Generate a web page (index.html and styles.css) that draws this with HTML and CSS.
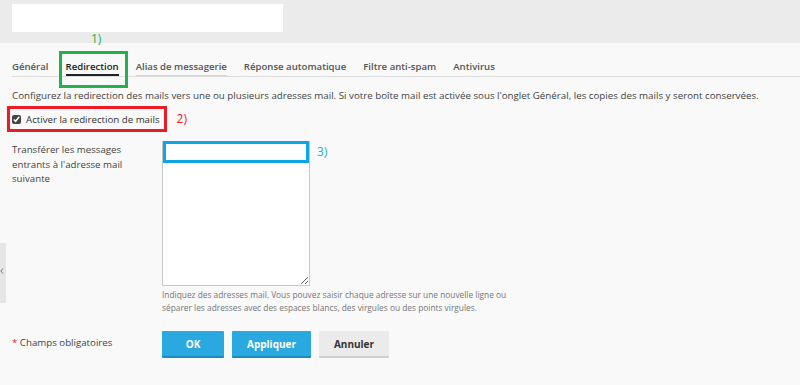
FILE: index.html
```html
<!DOCTYPE html>
<html lang="fr">
<head>
<meta charset="utf-8">
<title>Redirection</title>
<link rel="stylesheet" href="styles.css">
</head>
<body>
<header class="topbar">
  <div class="title-box"></div>
</header>
<span class="note note-green">1)</span>
<div class="mark-green"></div>
<main class="content">
  <nav class="tabs">
    <a class="tab">Général</a>
    <a class="tab active">Redirection</a>
    <a class="tab hover">Alias de messagerie</a>
    <a class="tab">Réponse automatique</a>
    <a class="tab">Filtre anti-spam</a>
    <a class="tab">Antivirus</a>
  </nav>
  <p class="intro">Configurez la redirection des mails vers une ou plusieurs adresses mail. Si votre boîte mail est activée sous l'onglet Général, les copies des mails y seront conservées.</p>
  <div class="check-line">
    <label class="check-row"><input type="checkbox" checked class="check"><span>Activer la redirection de mails</span></label>
    <span class="note note-red">2)</span>
  </div>
  <div class="form-row">
    <div class="field-label">Transférer les messages entrants à l'adresse mail suivante</div>
    <div class="field">
      <div class="field-top">
        <div class="area-wrap">
          <textarea class="area"></textarea>
          <div class="mark-blue"></div>
        </div>
        <span class="note note-blue">3)</span>
      </div>
      <p class="hint">Indiquez des adresses mail. Vous pouvez saisir chaque adresse sur une nouvelle ligne ou séparer les adresses avec des espaces blancs, des virgules ou des points virgules.</p>
    </div>
  </div>
  <div class="form-row actions-row">
    <div class="field-label required"><span class="star">*</span> Champs obligatoires</div>
    <div class="buttons">
      <button class="btn btn-primary btn-ok">OK</button>
      <button class="btn btn-primary btn-apply">Appliquer</button>
      <button class="btn btn-default btn-cancel">Annuler</button>
    </div>
  </div>
</main>
<div class="side-toggle"><svg class="chev" width="4" height="6" viewBox="0 0 4 6"><path d="M3 0.5 L0.8 3 L3 5.5" fill="none" stroke="#777" stroke-width="1"/></svg></div>
</body>
</html>
```
FILE: styles.css
```css
* { box-sizing: border-box; }
html, body {
  margin: 0;
  padding: 0;
  background: #f9f9f9;
  font-family: "Open Sans", "Liberation Sans", sans-serif;
  color: #333;
  width: 800px;
  height: 385px;
  overflow: hidden;
}
.topbar {
  height: 43px;
  background: #ebebeb;
  padding: 4px 0 0 12px;
}
.title-box {
  width: 271px;
  height: 28px;
  background: #fff;
}
.content {
  padding: 0 0 0 12px;
}
.tabs {
  display: flex;
  gap: 17px;
  margin-top: 14px;
  border-bottom: 1px solid #dcdcdc;
}
.tab {
  font-size: 9.6px;
  font-weight: 600;
  color: #555;
  line-height: 15px;
  padding: 2px 0 2px;
  white-space: nowrap;
}
.tab.active {
  color: #222;
  box-shadow: inset 0 -2px 0 #222;
}
.tab.hover {
  box-shadow: inset 0 -1px 0 #bcdff0;
}
.intro {
  margin: 11px 0 0;
  font-size: 9.75px;
  line-height: 15px;
  color: #444;
  white-space: nowrap;
}
.check-line {
  display: flex;
  align-items: center;
  margin: 3px 0 0 -5px;
}
.check-row {
  display: flex;
  align-items: center;
  border: 3px solid #ed1c24;
  height: 26px;
  padding: 0 4px 0 2px;
  font-size: 9.7px;
  color: #333;
}
.check {
  width: 9px;
  height: 9px;
  margin: 0 5px 0 0;
  accent-color: #444;
}
.note {
  font-size: 12px;
  line-height: 14px;
}
.note-red {
  color: #ed1c24;
  margin-left: 10px;
}
.note-blue {
  color: #29abe2;
  margin: 4px 0 0 7px;
}
.note-green {
  position: absolute;
  left: 91px;
  top: 32px;
  color: #22b14c;
}
.mark-green {
  position: absolute;
  left: 59px;
  top: 51px;
  width: 69px;
  height: 37px;
  border: 3px solid #22b14c;
}
.form-row {
  display: flex;
  margin-top: 9px;
}
.field-label {
  width: 150px;
  font-size: 9.7px;
  line-height: 14.5px;
  color: #444;
  padding: 2px 10px 0 0;
}
.field-top {
  display: flex;
  align-items: flex-start;
}
.area-wrap {
  position: relative;
  width: 148px;
  height: 145px;
}
.area {
  display: block;
  width: 148px;
  height: 145px;
  margin: 0;
  border: 1px solid #c8c8c8;
  background: #fff;
  resize: both;
}
.mark-blue {
  position: absolute;
  left: 1px;
  top: 0;
  width: 146px;
  height: 22px;
  border: 3px solid #0ea5e3;
  background: #fff;
}
.hint {
  margin: 2px 0 0;
  width: 360px;
  font-size: 8.35px;
  line-height: 13px;
  color: #777;
}
.actions-row {
  margin-top: 17px;
}
.required {
  padding-top: 5px;
}
.star {
  color: #e0242a;
}
.buttons {
  display: flex;
  gap: 8px;
}
.btn {
  height: 27px;
  border: 0;
  border-radius: 1px;
  font-family: "Open Sans", "Liberation Sans", sans-serif;
  font-size: 10px;
  font-weight: 700;
  padding: 0;
}
.btn-primary {
  background: #29a9df;
  color: #fff;
  border-bottom: 2px solid #1c8cc0;
}
.btn-default {
  background: #ebebeb;
  color: #333;
  border-bottom: 2px solid #cfcfcf;
}
.btn-ok { width: 62px; }
.btn-apply { width: 79px; }
.btn-cancel { width: 70px; }
.side-toggle {
  position: absolute;
  left: 0;
  top: 243px;
  width: 6px;
  height: 60px;
  background: #e6e6e6;
  border-radius: 0 2px 2px 0;
  overflow: hidden;
}
.chev {
  position: absolute;
  left: 0;
  top: 25px;
}
```
